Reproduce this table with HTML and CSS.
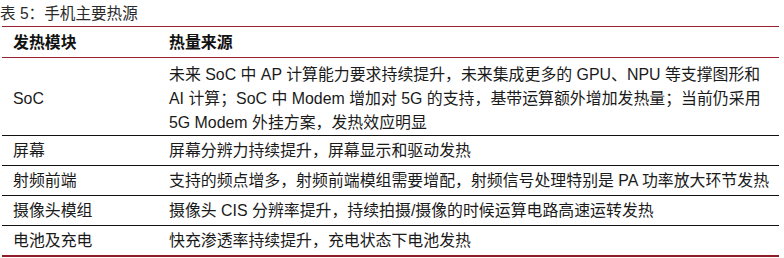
FILE: index.html
```html
<!DOCTYPE html>
<html lang="zh-CN">
<head>
<meta charset="utf-8">
<title>表 5：手机主要热源</title>
<link rel="stylesheet" href="styles.css">
</head>
<body>
<div class="caption">表 5：手机主要热源</div>
<div class="table">
  <div class="row head">
    <div class="c1">发热模块</div>
    <div class="c2">热量来源</div>
  </div>
  <div class="row first">
    <div class="c1">SoC</div>
    <div class="c2">未来 SoC 中 AP 计算能力要求持续提升，未来集成更多的 GPU、NPU 等支撑图形和<br>AI 计算；SoC 中 Modem 增加对 5G 的支持，基带运算额外增加发热量；当前仍采用<br>5G Modem 外挂方案，发热效应明显</div>
  </div>
  <div class="row">
    <div class="c1">屏幕</div>
    <div class="c2">屏幕分辨力持续提升，屏幕显示和驱动发热</div>
  </div>
  <div class="row">
    <div class="c1">射频前端</div>
    <div class="c2">支持的频点增多，射频前端模组需要增配，射频信号处理特别是 PA 功率放大环节发热</div>
  </div>
  <div class="row">
    <div class="c1">摄像头模组</div>
    <div class="c2">摄像头 CIS 分辨率提升，持续拍摄/摄像的时候运算电路高速运转发热</div>
  </div>
  <div class="row last">
    <div class="c1">电池及充电</div>
    <div class="c2">快充渗透率持续提升，充电状态下电池发热</div>
  </div>
</div>
</body>
</html>
```
FILE: styles.css
```css
html, body {
  margin: 0;
  padding: 0;
  background: #ffffff;
}
body {
  font-family: "Liberation Sans", "Noto Sans CJK SC", sans-serif;
  color: #1a1a1a;
  width: 784px;
  height: 258px;
  overflow: hidden;
}
.caption {
  font-size: 15.6px;
  line-height: 25px;
  height: 26px;
  padding-top: 1px;
  box-sizing: border-box;
  color: #2a2a2a;
  white-space: nowrap;
}
.table {
  margin-left: 2px;
  width: 777px;
  border-bottom: 2px solid #8e1b26;
}
.row {
  display: flex;
  border-top: 1px solid #111111;
  font-size: 15.9px;
  line-height: 24px;
  padding: 3px 0 2px;
  white-space: nowrap;
}
.row.head {
  border-top: 1px solid #9a2230;
  border-bottom: 1px solid #9a2230;
  font-weight: bold;
  padding: 4px 0 2px;
  color: #111111;
}
.row.first {
  border-top: none;
  padding: 5px 0 0;
}
.c1 {
  width: 145px;
  padding-left: 11px;
  flex: none;
  display: flex;
  align-items: center;
}
.c2 {
  flex: 1;
  padding-left: 11px;
}
```
